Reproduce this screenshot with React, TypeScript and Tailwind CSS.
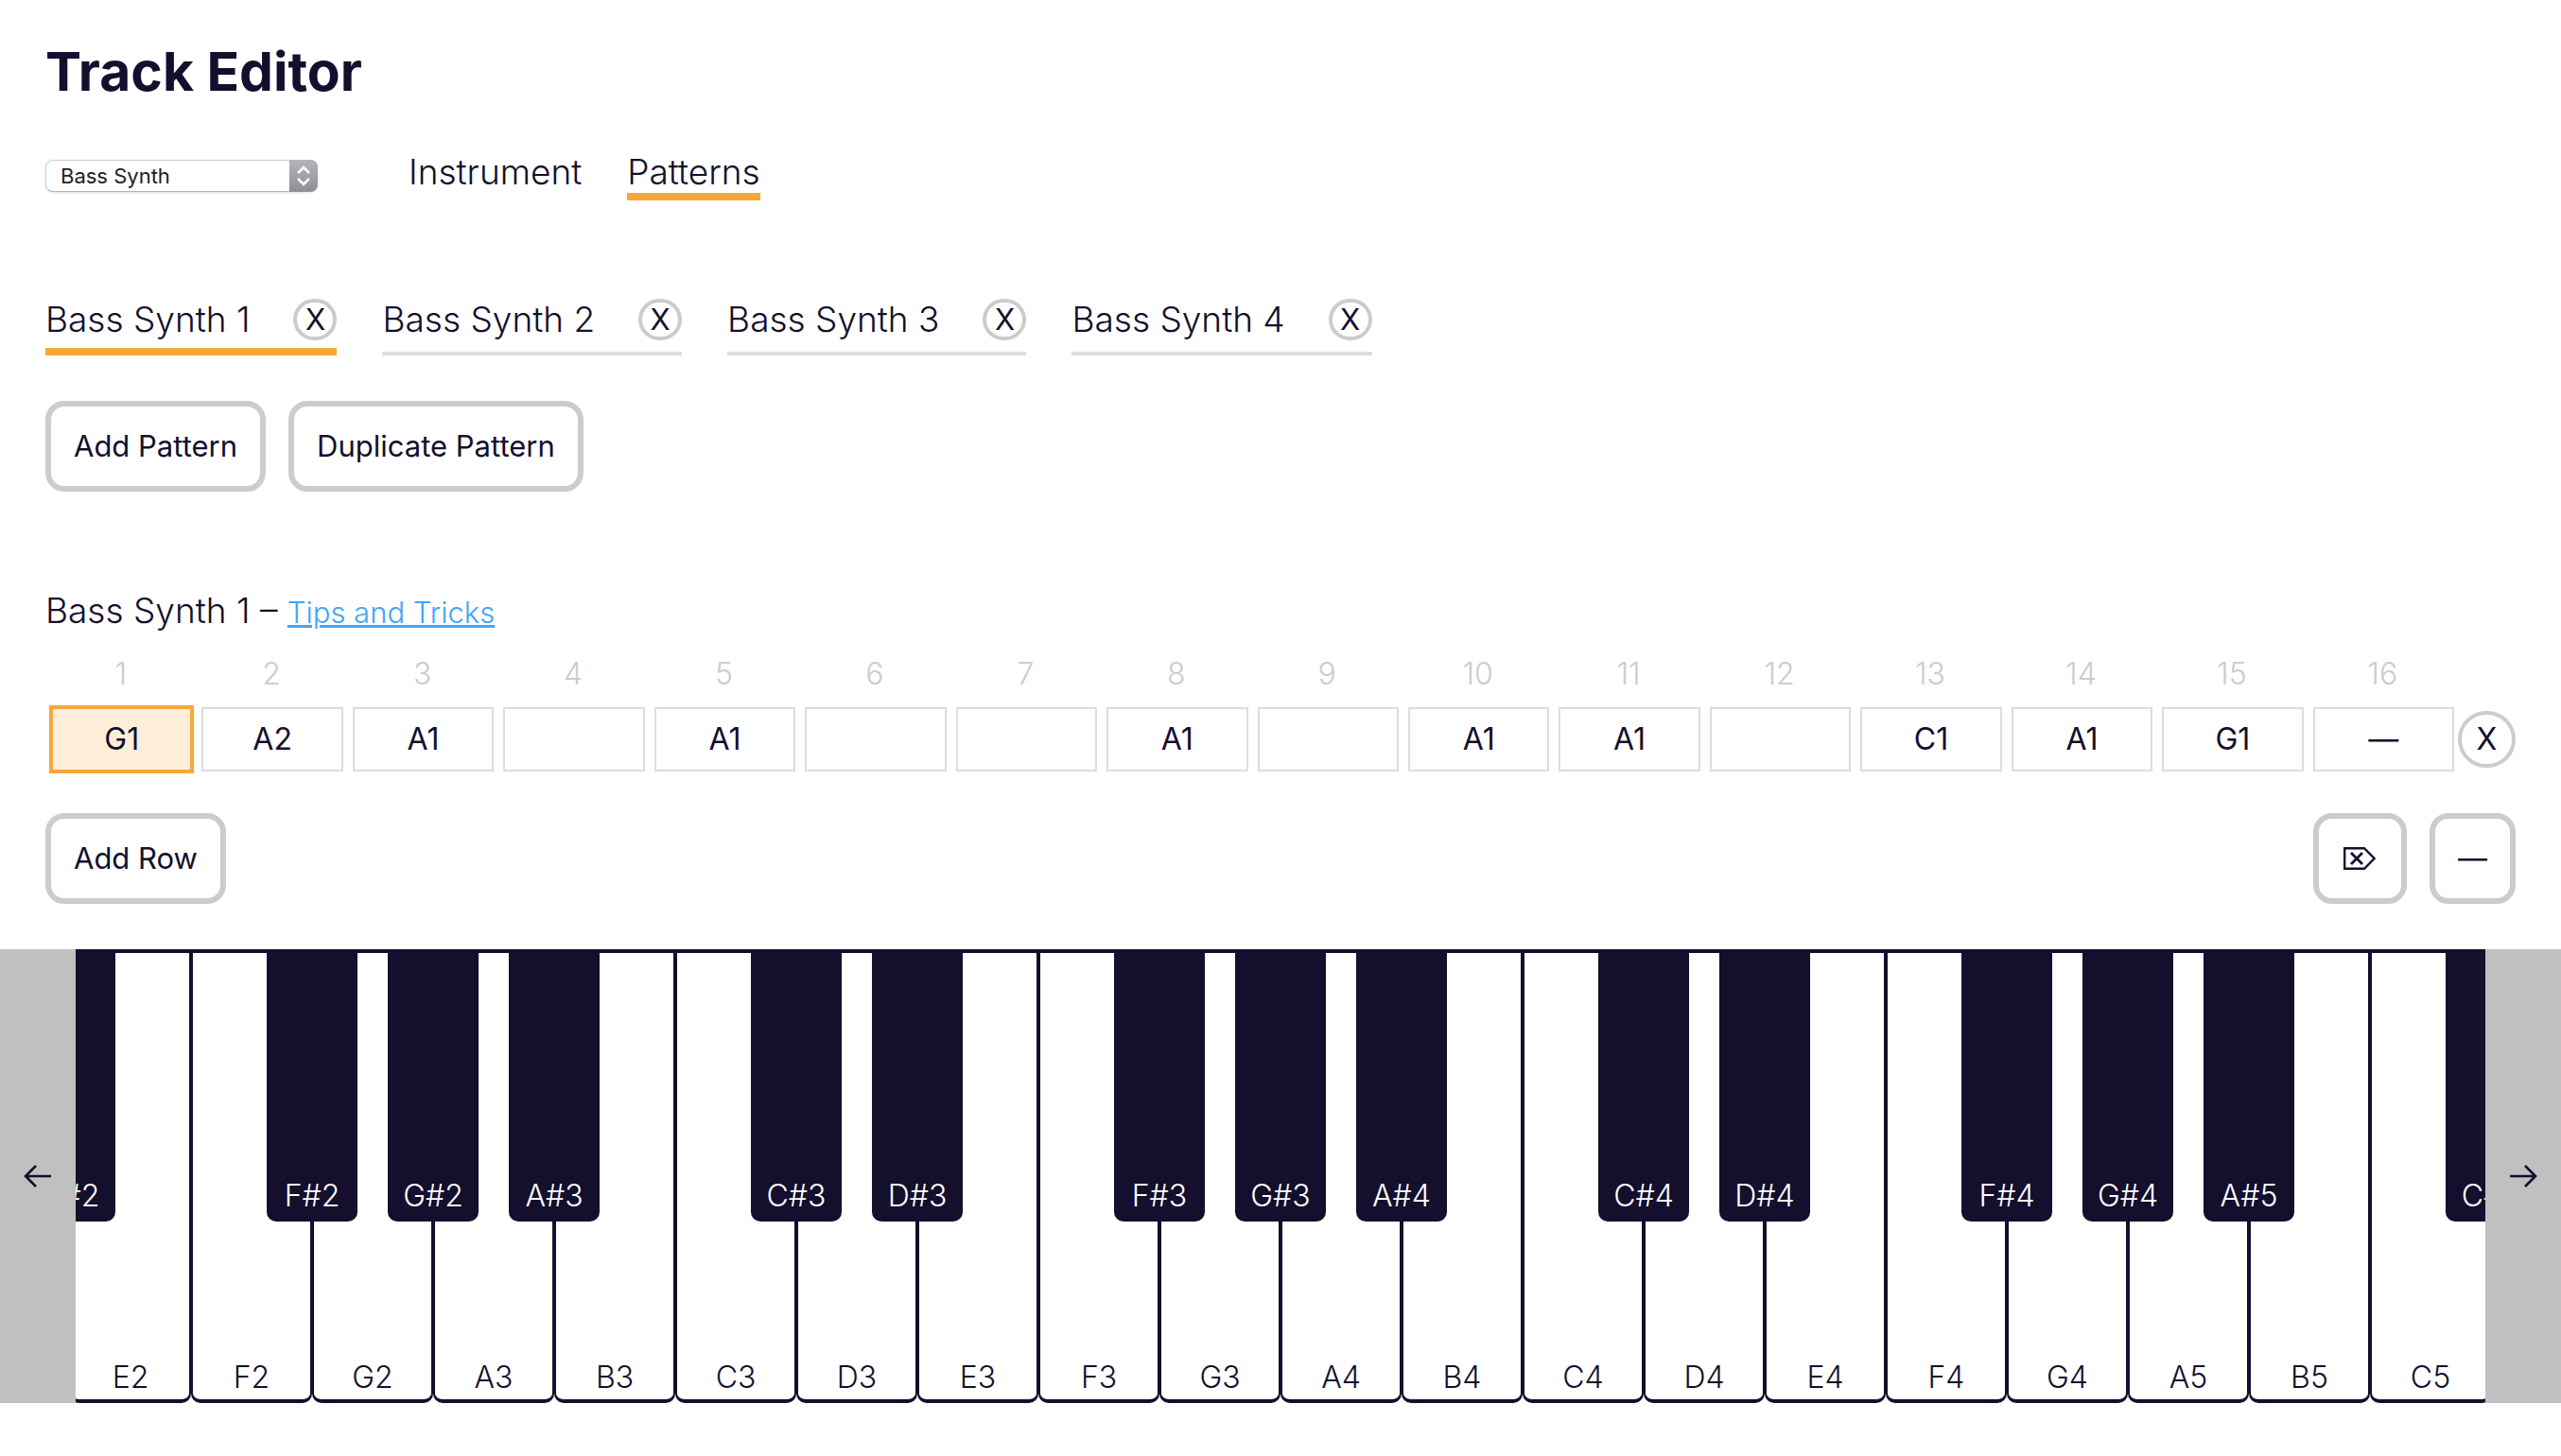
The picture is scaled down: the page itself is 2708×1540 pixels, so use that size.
import React, { useState } from "react";

const PATTERNS = ["Bass Synth 1", "Bass Synth 2", "Bass Synth 3", "Bass Synth 4"];
const STEPS = ["G1", "A2", "A1", "", "A1", "", "", "A1", "", "A1", "A1", "", "C1", "A1", "G1", "—"];

type Key = { note: string; sharp?: string; edge?: boolean };

const KEYS: Key[] = [
  { note: "D2", sharp: "D#2", edge: true },
  { note: "E2" },
  { note: "F2", sharp: "F#2" },
  { note: "G2", sharp: "G#2" },
  { note: "A3", sharp: "A#3" },
  { note: "B3" },
  { note: "C3", sharp: "C#3" },
  { note: "D3", sharp: "D#3" },
  { note: "E3" },
  { note: "F3", sharp: "F#3" },
  { note: "G3", sharp: "G#3" },
  { note: "A4", sharp: "A#4" },
  { note: "B4" },
  { note: "C4", sharp: "C#4" },
  { note: "D4", sharp: "D#4" },
  { note: "E4" },
  { note: "F4", sharp: "F#4" },
  { note: "G4", sharp: "G#4" },
  { note: "A5", sharp: "A#5" },
  { note: "B5" },
  { note: "C5", sharp: "C#5" },
  { note: "D5", edge: true },
];

function BoxButton({ label, children }: { label?: string; children: React.ReactNode }) {
  return (
    <button
      type="button"
      aria-label={label}
      className="flex h-24 items-center justify-center rounded-[20px] border-[6px] border-[#ccc] px-6 text-[31px]"
    >
      {children}
    </button>
  );
}

function DeleteIcon() {
  return (
    <svg width="39" height="28" viewBox="0 0 39 28" fill="none" stroke="currentColor" strokeWidth="2.4" aria-hidden="true">
      <path d="M3.2 3.2H24L34.6 14L24 24.8H3.2Z" />
      <path d="M10 8L22 20M22 8L10 20" strokeWidth="2.8" />
    </svg>
  );
}

function Arrow({ right }: { right?: boolean }) {
  return (
    <svg
      width="32"
      height="24"
      viewBox="0 0 32 24"
      fill="none"
      stroke="currentColor"
      strokeWidth="2.6"
      className={right ? "rotate-180" : ""}
      aria-hidden="true"
    >
      <path d="M30 12H3M14 1L3 12L14 23" />
    </svg>
  );
}

function PianoKey({ note, sharp, edge }: Key) {
  return (
    <div className="relative h-full w-32 shrink-0">
      <button
        type="button"
        aria-label={note}
        className="flex h-full w-full items-end justify-center rounded-b-[10px] border-x-2 border-y-4 border-[#130f2d] pb-[3px] text-[32px] leading-10 font-light"
      >
        {edge ? null : note}
      </button>
      {sharp && (
        <button
          type="button"
          className="absolute top-0 -right-12 z-10 flex h-3/5 w-24 items-end justify-center rounded-b-[10px] bg-[#130f2d] pb-[7px] text-[32px] leading-10 font-light text-white"
        >
          {sharp}
        </button>
      )}
    </div>
  );
}

export default function App() {
  const [active, setActive] = useState(0);
  return (
    <main className="min-h-screen overflow-hidden bg-white font-['Inter',sans-serif] text-[#130f2d]">
      <div className="px-12 pt-10">
        <h1 className="text-[57px] leading-[72px] font-bold">Track Editor</h1>

        <div className="mt-12 flex h-[52px] items-start">
          <div className="relative mt-[9px] mr-24 w-72">
            <select
              aria-label="Track"
              className="block h-[34px] w-full appearance-none rounded-lg border border-[#d0d0d0] border-b-[#b4b4b4] bg-white pl-[15px] text-[22px] leading-7 text-[#222] shadow-sm"
            >
              <option>Bass Synth</option>
            </select>
            <span className="pointer-events-none absolute inset-y-0 right-0 flex w-[30px] items-center justify-center rounded-r-lg bg-linear-to-b from-[#b5b4b9] to-[#8f8e93]">
              <svg width="16" height="24" viewBox="0 0 16 24" fill="none" stroke="#fff" strokeWidth="2.6" aria-hidden="true">
                <path d="M2 9L8 3L14 9M2 15L8 21L14 15" />
              </svg>
            </span>
          </div>
          <nav className="flex gap-12 text-[37px] leading-11 font-light">
            <a href="#instrument">Instrument</a>
            <a href="#patterns" className="border-b-8 border-[#f5a83c]">Patterns</a>
          </nav>
        </div>

        <div className="mt-[100px] flex gap-12">
          {PATTERNS.map((name, i) => (
            <div
              key={name}
              className={
                i === active
                  ? "flex h-16 items-start gap-[46px] border-b-8 border-[#f5a83c]"
                  : "flex h-16 items-start gap-[46px] border-b-4 border-[#ddd]"
              }
            >
              <button type="button" onClick={() => setActive(i)} className="text-[37px] leading-[52px] font-light">
                {name}
              </button>
              <button
                type="button"
                aria-label={"Delete " + name}
                className="mt-1 flex h-11 w-[46px] items-center justify-center rounded-full border-4 border-[#ccc] text-[31px] leading-9"
              >
                X
              </button>
            </div>
          ))}
        </div>

        <div className="mt-12 flex gap-6">
          <BoxButton>Add Pattern</BoxButton>
          <BoxButton>Duplicate Pattern</BoxButton>
        </div>

        <h2 className="mt-[100px] h-[52px] text-[37px] leading-[52px] font-light">
          {PATTERNS[active]} –{" "}
          <a href="#tips" className="text-[31px] text-[#42a5f5] underline">Tips and Tricks</a>
        </h2>

        <table className="mt-4 w-full table-fixed border-separate border-spacing-0 text-center">
          <thead>
            <tr className="h-[58px] align-top text-[32px] leading-[50px] text-[#ccc]">
              {STEPS.map((_, i) => (
                <th key={i} scope="col" className="p-0 text-center font-light">{i + 1}</th>
              ))}
              <td className="w-[61px]" />
            </tr>
          </thead>
          <tbody>
            <tr>
              {STEPS.map((s, i) => (
                <td key={i} className={i === 0 ? "p-0 pr-[2px] pl-1" : "p-0 pr-1 pl-[6px]"}>
                  <button
                    type="button"
                    aria-label={"Step " + (i + 1)}
                    className={
                      i === 0
                        ? "flex h-[72px] w-full items-center justify-center border-4 border-[#f5a83c] bg-[#feeed9] text-[32px]"
                        : "flex h-[68px] w-full items-center justify-center border-2 border-[#ddd] text-[32px]"
                    }
                  >
                    {s}
                  </button>
                </td>
              ))}
              <td className="p-0">
                <button
                  type="button"
                  aria-label="Delete row"
                  className="flex h-15 w-full items-center justify-center rounded-full border-4 border-[#ccc] text-[32px]"
                >
                  X
                </button>
              </td>
            </tr>
          </tbody>
        </table>

        <div className="mt-[42px] flex gap-6">
          <BoxButton>Add Row</BoxButton>
          <div className="grow" />
          <BoxButton label="Clear note">
            <DeleteIcon />
          </BoxButton>
          <BoxButton>—</BoxButton>
        </div>
      </div>

      <section aria-label="Keyboard" className="mt-12 flex h-[480px]">
        <button type="button" aria-label="Scroll left" className="flex w-20 shrink-0 items-center justify-center bg-[#c0c0c0]">
          <Arrow />
        </button>
        <div className="flex min-w-0 flex-1 justify-center overflow-hidden">
          {KEYS.map((k) => (
            <PianoKey key={k.note} {...k} />
          ))}
        </div>
        <button type="button" aria-label="Scroll right" className="flex w-20 shrink-0 items-center justify-center bg-[#c0c0c0]">
          <Arrow right />
        </button>
      </section>
    </main>
  );
}
